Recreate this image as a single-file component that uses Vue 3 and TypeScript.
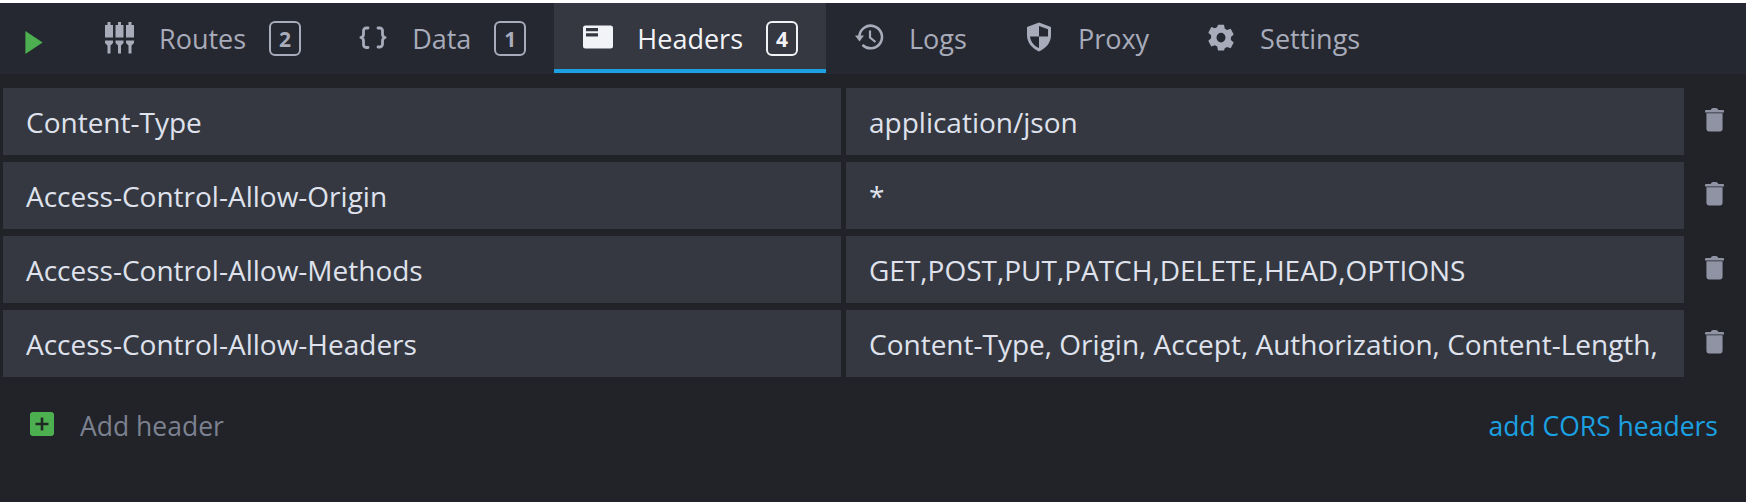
<script setup lang="ts">
interface Tab {
  name: string
  icon: string
  count?: number
  active?: boolean
}

const tabs: Tab[] = [
  { name: 'Routes', icon: 'routes', count: 2 },
  { name: 'Data', icon: 'data', count: 1 },
  { name: 'Headers', icon: 'headers', count: 4, active: true },
  { name: 'Logs', icon: 'logs' },
  { name: 'Proxy', icon: 'proxy' },
  { name: 'Settings', icon: 'settings' }
]

const routeColumns = [0, 10.5, 21]

const headers = [
  { key: 'Content-Type', value: 'application/json' },
  { key: 'Access-Control-Allow-Origin', value: '*' },
  { key: 'Access-Control-Allow-Methods', value: 'GET,POST,PUT,PATCH,DELETE,HEAD,OPTIONS' },
  { key: 'Access-Control-Allow-Headers', value: 'Content-Type, Origin, Accept, Authorization, Content-Length,' }
]
</script>

<template>
  <div class="page">
    <nav class="nav">
      <button class="play" aria-label="Start">
        <svg width="18" height="23" viewBox="0 0 18 24"><path d="M0 0l18 12L0 24z" fill="#4caf50" /></svg>
      </button>
      <a v-for="tab in tabs" :key="tab.name" class="tab" :class="{ active: tab.active }">
        <svg class="icon" width="32" height="32" viewBox="0 0 32 32">
          <template v-if="tab.icon === 'routes'">
            <path
              v-for="dx in routeColumns"
              :key="dx"
              :transform="`translate(${dx} 0)`"
              fill="currentColor"
              d="M3.500 0h3v3H9v12.500H1V3h2.500zM1 18.500h8V21l-2.500 2.500v8h-3v-8L1 21z"
            />
          </template>
          <template v-else-if="tab.icon === 'data'">
            <path fill="none" stroke="currentColor" stroke-width="2.800" stroke-linecap="round" stroke-linejoin="round" d="M11 6H9.300a2.800 2.800 0 0 0-2.800 2.800v3.400c0 1.700-1 2.900-2.600 3.300 1.600.4 2.600 1.600 2.600 3.300v3.400A2.800 2.800 0 0 0 9.300 25.500H11M21 6h1.700a2.800 2.800 0 0 1 2.800 2.800v3.400c0 1.700 1 2.900 2.600 3.300-1.600.4-2.600 1.600-2.600 3.300v3.400a2.800 2.800 0 0 1-2.800 2.800H21" />
          </template>
          <template v-else-if="tab.icon === 'headers'">
            <path fill="currentColor" fill-rule="evenodd" d="M3.500 3.500h25A2.500 2.500 0 0 1 31 6v18a2.500 2.500 0 0 1-2.500 2.500h-25A2.500 2.500 0 0 1 1 24V6a2.500 2.500 0 0 1 2.500-2.500zM4 6v3.200h12V6zm0 5.300v3.200h12v-3.200z" />
          </template>
          <template v-else-if="tab.icon === 'logs'">
            <path fill="none" stroke="currentColor" stroke-width="2.600" d="M5.400 14.500A11.300 11.300 0 1 1 8.500 22.800" />
            <path fill="currentColor" d="M1 13.500h9L5.500 19.500z" />
            <path fill="none" stroke="currentColor" stroke-width="2.200" d="M16 8.500v7l5.500 4.500" />
          </template>
          <template v-else-if="tab.icon === 'proxy'">
            <path fill="currentColor" fill-rule="evenodd" d="M16 .5l12 4.500v8c0 8-5.500 13.500-12 16.500C9.500 26.500 4 21 4 13V5zm0 3.500v10.500H7c.6 5.500 4.300 9.500 9 11.500V14.500h8.900c.1-.5.100-1 .100-1.500V7.200z" />
          </template>
          <template v-else>
            <path transform="translate(0 .5) scale(1 1.080)" fill="currentColor" fill-rule="evenodd" d="M13 2h6l.8 3.700 2.300 1.300 3.600-1.200 3 5.200-2.800 2.500v2.600l2.800 2.500-3 5.200-3.600-1.200-2.300 1.300L19 26h-6l-.8-3.700-2.300-1.300-3.600 1.200-3-5.200 2.800-2.500v-2.600L3.300 9.400l3-5.200 3.600 1.200 2.300-1.300zm3 7.500a4.500 4.500 0 1 0 0 9 4.500 4.500 0 0 0 0-9z" />
          </template>
        </svg>
        <span class="label">{{ tab.name }}</span>
        <span v-if="tab.count" class="badge">{{ tab.count }}</span>
      </a>
    </nav>

    <main class="content">
      <div v-for="header in headers" :key="header.key" class="row">
        <div class="cell">{{ header.key }}</div>
        <div class="cell">{{ header.value }}</div>
        <button class="trash" aria-label="Delete">
          <svg width="19" height="25" viewBox="0 0 20 25">
            <path fill="currentColor" d="M0 3.500C0 2.800.6 2.400 1.500 2.400H6C6.500 1 7.500.5 10 .5s3.500.5 4 1.900h4.500c.9 0 1.500.4 1.500 1.100V5H0zM1.500 6h17v16.500A2.500 2.500 0 0 1 16 25H4a2.500 2.500 0 0 1-2.500-2.500z" />
          </svg>
        </button>
      </div>
      <div class="footer">
        <a class="add">
          <svg width="24" height="24" viewBox="0 0 24 24">
            <rect width="24" height="24" rx="3" fill="#4caf50" />
            <path d="M12 5.500v13M5.500 12h13" stroke="#1f2a24" stroke-width="2.600" />
          </svg>
          <span>Add header</span>
        </a>
        <a class="cors">add CORS headers</a>
      </div>
    </main>
  </div>
</template>

<style>
html,
body {
  background: #212329;
}
</style>

<style scoped>
.page {
  height: 502px;
  box-sizing: border-box;
  border-top: 3px solid #fff;
  background: #212329;
  font-family: 'Open Sans', 'Noto Sans', sans-serif;
  font-size: 28px;
  overflow: hidden;
}

.nav {
  display: flex;
  height: 71px;
  background: #252830;
  color: #a8abba;
  font-size: 27px;
}

.play {
  flex: none;
  width: 76px;
  padding: 10px 0 0 25px;
  border: 0;
  background: none;
  text-align: left;
}

.tab {
  display: flex;
  align-items: center;
  gap: 23px;
  box-sizing: border-box;
  height: 70px;
  padding: 3px 28px 0;
  border-bottom: 4px solid transparent;
}

.tab.active {
  background: #353841;
  border-bottom-color: #1ba1e2;
  color: #f2f3f7;
}

.icon {
  flex: none;
}

.label {
  padding-top: 2px;
}

.badge {
  display: flex;
  align-items: center;
  justify-content: center;
  width: 32px;
  height: 35px;
  box-sizing: border-box;
  margin-top: 2px;
  border: 2px solid currentColor;
  border-radius: 6px;
  font-size: 21px;
  font-weight: 700;
}

.content {
  padding: 14px 0 0 3px;
}

.row {
  display: flex;
  gap: 5px;
  height: 67px;
  margin-bottom: 7px;
}

.cell {
  flex: none;
  width: 838px;
  padding: 0 23px;
  box-sizing: border-box;
  background: #353841;
  color: #dfe2ec;
  line-height: 69px;
  white-space: nowrap;
  overflow: hidden;
}

.trash {
  flex: none;
  width: 50px;
  padding: 0 0 2px;
  border: 0;
  background: none;
  color: #8f93a3;
}

.footer {
  display: flex;
  justify-content: space-between;
  align-items: center;
  height: 84px;
  padding: 0 28px 0 27px;
  font-size: 26.5px;
}

.add {
  display: flex;
  align-items: center;
  gap: 26px;
  color: #7c8190;
}

.add svg {
  margin-top: -4px;
}

.cors {
  color: #1ba1e2;
}
</style>
